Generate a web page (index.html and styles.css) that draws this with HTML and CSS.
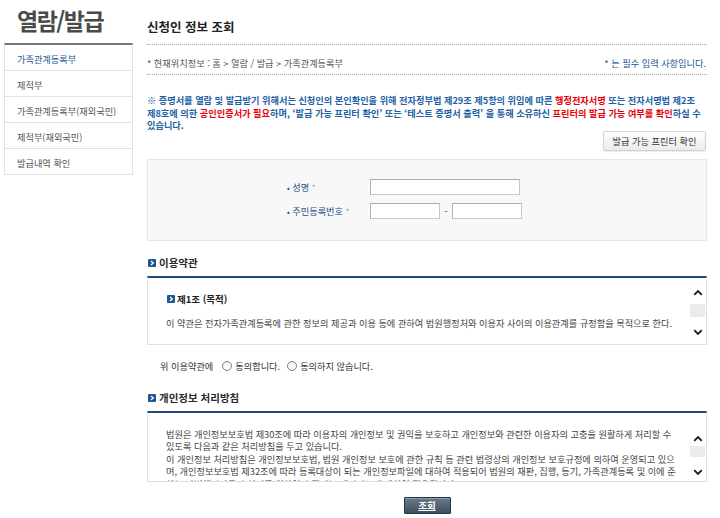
FILE: index.html
```html
<!DOCTYPE html>
<html lang="ko">
<head>
<meta charset="utf-8">
<title>열람/발급 - 신청인 정보 조회</title>
<link rel="stylesheet" href="styles.css">
</head>
<body>
<div class="page">
  <aside class="side">
    <h1 class="side-title">열람/발급</h1>
    <ul class="menu">
      <li class="on">가족관계등록부</li>
      <li>제적부</li>
      <li>가족관계등록부(재외국민)</li>
      <li>제적부(재외국민)</li>
      <li>발급내역 확인</li>
    </ul>
  </aside>
  <main class="main">
    <h2 class="page-title">신청인 정보 조회</h2>
    <div class="loc">
      <span>* 현재위치정보 : 홈 &gt; 열람 / 발급 &gt; 가족관계등록부</span>
      <span class="req">* 는 필수 입력 사항입니다.</span>
    </div>
    <p class="notice">※ 증명서를 열람 및 발급받기 위해서는 신청인의 본인확인을 위해 전자정부법 제29조 제5항의 위임에 따른 <em>행정전자서명</em> 또는 전자서명법 제2조<br>제8호에 의한 <em>공인인증서가 필요</em>하며, ‘발급 가능 프린터 확인’ 또는 ‘테스트 증명서 출력’ 을 통해 소유하신 <em>프린터의 발급 가능 여부를 확인</em>하실 수<br>있습니다.</p>
    <div class="btn-row"><button class="btn-light" type="button">발급 가능 프린터 확인</button></div>
    <div class="form-box">
      <div class="form-row">
        <label class="lbl"><span class="dot">•</span> 성명 <span class="star">*</span></label>
        <input class="inp inp-name" type="text">
      </div>
      <div class="form-row">
        <label class="lbl"><span class="dot">•</span> 주민등록번호 <span class="star">*</span></label>
        <input class="inp inp-jm" type="text"><span class="dash">-</span><input class="inp inp-jm" type="password">
      </div>
    </div>

    <h3 class="sec"><svg class="ico" viewBox="0 0 8 8" width="8" height="8"><rect width="8" height="8" rx="1" fill="#1f5590"/><path d="M3 2 L5.3 4 L3 6" fill="none" stroke="#fff" stroke-width="1.3"/></svg>이용약관</h3>
    <div class="terms terms1">
      <div class="terms-body">
        <h4 class="art"><svg class="ico" viewBox="0 0 8 8" width="8" height="8"><rect width="8" height="8" rx="1" fill="#1f5590"/><path d="M3 2 L5.3 4 L3 6" fill="none" stroke="#fff" stroke-width="1.3"/></svg>제1조 (목적)</h4>
        <p class="txt">이 약관은 전자가족관계등록에 관한 정보의 제공과 이용 등에 관하여 법원행정처와 이용자 사이의 이용관계를 규정함을 목적으로 한다.</p>
      </div>
      <div class="sbar">
        <svg class="arr" viewBox="0 0 10 7" width="10" height="7"><path d="M1.2 5.8 L5 2 L8.8 5.8" fill="none" stroke="#1a1a1a" stroke-width="1.8"/></svg>
        <span class="thumb"></span>
        <svg class="arr arr-down" viewBox="0 0 10 7" width="10" height="7"><path d="M1.2 1.2 L5 5 L8.8 1.2" fill="none" stroke="#1a1a1a" stroke-width="1.8"/></svg>
      </div>
    </div>

    <div class="agree">
      <span>위 이용약관에</span>
      <label class="rd"><span class="radio"></span>동의합니다.</label>
      <label class="rd"><span class="radio"></span>동의하지 않습니다.</label>
    </div>

    <h3 class="sec sec2"><svg class="ico" viewBox="0 0 8 8" width="8" height="8"><rect width="8" height="8" rx="1" fill="#1f5590"/><path d="M3 2 L5.3 4 L3 6" fill="none" stroke="#fff" stroke-width="1.3"/></svg>개인정보 처리방침</h3>
    <div class="terms terms2">
      <div class="terms-body">
        <p class="txt">법원은 개인정보보호법 제30조에 따라 이용자의 개인정보 및 권익을 보호하고 개인정보와 관련한 이용자의 고충을 원활하게 처리할 수<br>있도록 다음과 같은 처리방침을 두고 있습니다.</p>
        <p class="txt">이 개인정보 처리방침은 개인정보보호법, 법원 개인정보 보호에 관한 규칙 등 관련 법령상의 개인정보 보호규정에 의하여 운영되고 있으<br>며, 개인정보보호법 제32조에 따라 등록대상이 되는 개인정보파일에 대하여 적용되어 법원의 재판, 집행, 등기, 가족관계등록 및 이에 준<br>하는 사법행정사무의 처리를 위하여 수집되는 개인정보에 대하여 적용됩니다.</p>
      </div>
      <div class="sbar">
        <svg class="arr" viewBox="0 0 10 7" width="10" height="7"><path d="M1.2 5.8 L5 2 L8.8 5.8" fill="none" stroke="#1a1a1a" stroke-width="1.8"/></svg>
        <span class="thumb"></span>
        <svg class="arr arr-down" viewBox="0 0 10 7" width="10" height="7"><path d="M1.2 1.2 L5 5 L8.8 1.2" fill="none" stroke="#1a1a1a" stroke-width="1.8"/></svg>
      </div>
    </div>

    <div class="submit-row"><button class="btn-dark" type="button">조회</button></div>
  </main>
</div>
</body>
</html>
```

FILE: styles.css
```css
* { box-sizing: border-box; margin: 0; padding: 0; }

body {
  width: 720px;
  height: 518px;
  overflow: hidden;
  background: #fff;
  color: #444;
  font-family: "Noto Sans CJK KR", "Noto Sans", sans-serif;
  font-size: 9.2px;
}

.page {
  display: flex;
  align-items: flex-start;
  gap: 14px;
  padding-left: 4px;
}

/* ---------- sidebar ---------- */
.side { width: 129px; flex: none; }

.side-title {
  height: 43px;
  padding: 6px 0 0 13px;
  font-size: 23px;
  line-height: 29px;
  letter-spacing: -1.5px;
  font-weight: bold;
  color: #4a4a4a;
}

.menu {
  list-style: none;
  border-top: 2px solid #787878;
  border-left: 1px solid #e2e2e2;
  border-right: 1px solid #e2e2e2;
}

.menu li {
  height: 26px;
  padding: 4px 0 0 12px;
  line-height: 21px;
  border-bottom: 1px solid #e2e2e2;
  color: #555;
}

.menu li.on { color: #1b5896; }

/* ---------- main ---------- */
.main { width: 560px; flex: none; }

.page-title {
  height: 45px;
  padding-top: 20px;
  font-size: 12.5px;
  line-height: 14px;
  font-weight: bold;
  color: #222;
  border-bottom: 1px dotted #a9a9a9;
}

.loc {
  display: flex;
  justify-content: space-between;
  height: 30px;
  padding: 12px 1px 0 0;
  line-height: 12px;
  color: #555;
  border-bottom: 1px dotted #a9a9a9;
}

.req { color: #1b5896; }

.notice {
  margin-top: 19px;
  line-height: 12.5px;
  color: #2461a4;
  font-weight: bold;
  white-space: nowrap;
}

.notice em { font-style: normal; color: #e8000b; }

.btn-row {
  display: flex;
  justify-content: flex-end;
  padding-right: 1px;
  margin-top: -1px;
}

.btn-light {
  width: 103px;
  height: 20px;
  font-family: inherit;
  font-size: 9.2px;
  color: #333;
  background: linear-gradient(#ffffff, #ebebeb);
  border: 1px solid #d2d2d2;
  border-radius: 2px;
  box-shadow: 0 1px 1px rgba(0, 0, 0, 0.08);
}

.form-box {
  margin-top: 8px;
  height: 82px;
  padding: 19px 0 0 139px;
  background: #f8f8f8;
  border: 1px solid #e6e6e6;
}

.form-row {
  display: flex;
  align-items: center;
  height: 16px;
}

.form-row + .form-row { margin-top: 8px; }

.lbl { width: 83px; color: #1f4f87; }
.dot { font-size: 8px; color: #1f4f87; }
.star { color: #7f99b8; font-size: 8px; }

.inp {
  height: 16px;
  background: #fff;
  border: 1px solid #c8c8c8;
  border-top-color: #a9a9a9;
  border-left-color: #b3b3b3;
}

.inp-name { width: 150px; }
.inp-jm { width: 70px; }

.dash {
  width: 12px;
  text-align: center;
  color: #444;
}

.sec {
  display: flex;
  align-items: center;
  gap: 3px;
  margin-top: 15px;
  padding-left: 1px;
  height: 14px;
  font-size: 10.5px;
  line-height: 14px;
  font-weight: bold;
  color: #2a2a2a;
}

.sec2 { margin-top: 19px; }

.ico { flex: none; }

.terms {
  display: flex;
  margin-top: 6px;
  overflow: hidden;
  border: 1px solid #d8e0e9;
  border-top: 2px solid #1e4a7a;
}

.terms1 { height: 69px; }
.terms2 { height: 71px; }

.terms-body {
  flex: 1;
  padding-left: 18px;
  overflow: hidden;
}

.terms1 .terms-body { padding-top: 14px; }
.terms2 .terms-body { padding-top: 15px; }

.art {
  display: flex;
  align-items: center;
  gap: 2px;
  height: 14px;
  font-size: 9.5px;
  font-weight: bold;
  color: #222;
}

.art .ico { margin-left: 1px; }

.txt {
  line-height: 12.5px;
  color: #444;
  white-space: nowrap;
}

.terms1 .txt { margin-top: 11px; }

.sbar {
  width: 17px;
  flex: none;
  display: flex;
  flex-direction: column;
  align-items: center;
}

.terms1 .sbar { padding: 11px 0 8px; }
.terms2 .sbar { padding: 22px 0 5px; }

.arr { flex: none; }
.arr-down { margin-top: auto; }

.thumb {
  width: 15px;
  height: 13px;
  margin-top: 8px;
  background: #ebebeb;
}

.terms2 .thumb { margin-top: 4px; height: 11px; }

.agree {
  display: flex;
  align-items: center;
  gap: 9px;
  margin-top: 15px;
  padding-left: 13px;
  height: 12px;
  color: #333;
}

.rd {
  display: flex;
  align-items: center;
  gap: 3px;
}

.rd + .rd { margin-left: -2px; }

.radio {
  width: 10px;
  height: 10px;
  border-radius: 50%;
  border: 1px solid #7d7d7d;
  background: linear-gradient(#f0f0f0, #ffffff);
}

.submit-row {
  display: flex;
  justify-content: center;
  margin-top: 15px;
}

.btn-dark {
  width: 47px;
  height: 17px;
  font-family: inherit;
  font-size: 9.5px;
  font-weight: bold;
  color: #fff;
  text-decoration: underline;
  background: linear-gradient(#687a8c, #3e4f61);
  border: 1px solid #27333f;
  border-radius: 1px;
  box-shadow: inset 0 1px 0 rgba(255, 255, 255, 0.25);
}
```
